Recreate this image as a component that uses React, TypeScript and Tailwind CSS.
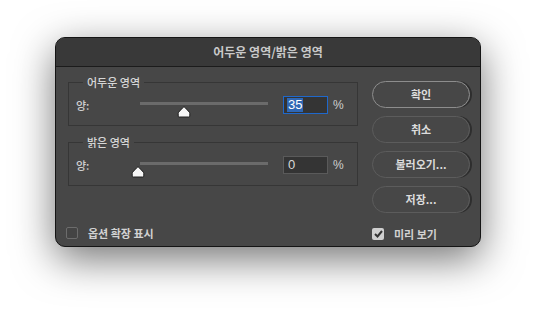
import React from "react";

const font = { fontFamily: '"Noto Sans CJK KR", "Noto Sans", sans-serif' };

function Thumb() {
  return (
    <svg width="14" height="12" viewBox="0 0 14 12">
      <path d="M7 1 Q7.6 1 8.4 1.9 L12.2 6 Q12.8 6.7 12.8 7.6 L12.8 10 Q12.8 11 11.8 11 L2.2 11 Q1.2 11 1.2 10 L1.2 7.6 Q1.2 6.7 1.8 6 L5.6 1.9 Q6.4 1 7 1 Z" fill="#f6f6f6" stroke="#1e1e1e" strokeWidth="1" />
    </svg>
  );
}

function Group({ title, value, pos, selected }: { title: string; value: string; pos: number; selected?: boolean }) {
  return (
    <div className="relative w-[290px] h-[44px] border border-[#363636] mt-2">
      <span className="absolute -top-[10px] left-[14px] bg-[#474747] px-[4px] text-[11px] leading-[18px] font-medium text-[#d6d6d6]">
        {title}
      </span>
      <div className="flex items-center h-full pl-[7px] pt-[2px]">
        <span className="text-[11px] font-medium text-[#cfcfcf] w-[64px]">양:</span>
        <div className="relative w-[128px] h-[20px]">
          <div className="absolute top-[7px] left-0 right-0 h-[3px] bg-[#6b6b6b]" />
          <div className="absolute top-[11px]" style={{ left: pos - 7 }}>
            <Thumb />
          </div>
        </div>
        <div
          className={`ml-[15px] w-[45px] h-[18px] bg-[#343434] flex items-center px-[3px] border ${
            selected ? "border-[#1f68cc]" : "border-[#5a5a5a]"
          }`}
        >
          {selected ? (
            <span className="bg-[#2f67b4] text-white text-[13px] leading-[14px] px-[1px]" style={{ fontFamily: '"Liberation Sans", sans-serif' }}>
              {value}
            </span>
          ) : (
            <span className="text-[#d8d8d8] text-[13px] leading-[14px] px-[1px]" style={{ fontFamily: '"Liberation Sans", sans-serif' }}>
              {value}
            </span>
          )}
        </div>
        <span className="ml-[5px] text-[12px] text-[#d0d0d0]" style={{ fontFamily: '"Liberation Sans", sans-serif' }}>%</span>
      </div>
    </div>
  );
}

function Btn({ label, primary }: { label: string; primary?: boolean }) {
  return (
    <button
      className={`w-[98px] h-[27px] rounded-full text-[11px] text-[#dcdcdc] font-bold shadow-[2px_0_0_#2e2e2e] ${
        primary ? "border-[1.5px] border-[#8d8d8d]" : "border border-[#5c5c5c]"
      }`}
    >
      {label}
    </button>
  );
}

export default function App() {
  return (
    <div className="w-[536px] h-[320px] bg-white pl-[55px] pt-[37px]" style={font}>
      <div className="w-[426px] h-[210px] rounded-[10px] bg-[#474747] border border-[#151515] shadow-[0_12px_40px_rgba(0,0,0,0.55)] overflow-hidden flex flex-col">
        {/* 제목 */}
        <div className="h-[29px] bg-[#393939] border-b border-[#1c1c1c] flex items-center justify-center">
          <span className="text-[12px] font-bold text-[#c9c9c9]">어두운 영역/밝은 영역</span>
        </div>

        <div className="flex flex-1 pl-[12px] pr-[10px]">
          <div className="flex flex-col pt-[7px]">
            <Group title="어두운 영역" value="35" pos={44} selected />
            <div className="h-[8px]" />
            <Group title="밝은 영역" value="0" pos={-2} />
            <label className="flex items-center mt-[39px] ml-[-2px]">
              <span className="w-[12px] h-[12px] rounded-[2px] border border-[#6c6c6c] bg-[#444]" />
              <span className="ml-[10px] text-[11px] font-bold text-[#d2d2d2]">옵션 확장 표시</span>
            </label>
          </div>

          <div className="ml-auto flex flex-col pt-[14px] gap-[8px]">
            <Btn label="확인" primary />
            <Btn label="취소" />
            <Btn label="불러오기..." />
            <Btn label="저장..." />
            <label className="flex items-center mt-[5px]">
              <span className="w-[12px] h-[12px] rounded-[2px] bg-[#cfcfcf] flex items-center justify-center">
                <svg width="9" height="8" viewBox="0 0 9 8">
                  <path d="M1 4 L3.5 6.5 L8 1" fill="none" stroke="#333" strokeWidth="2" />
                </svg>
              </span>
              <span className="ml-[10px] text-[11px] font-bold text-[#d2d2d2]">미리 보기</span>
            </label>
          </div>
        </div>
      </div>
    </div>
  );
}
